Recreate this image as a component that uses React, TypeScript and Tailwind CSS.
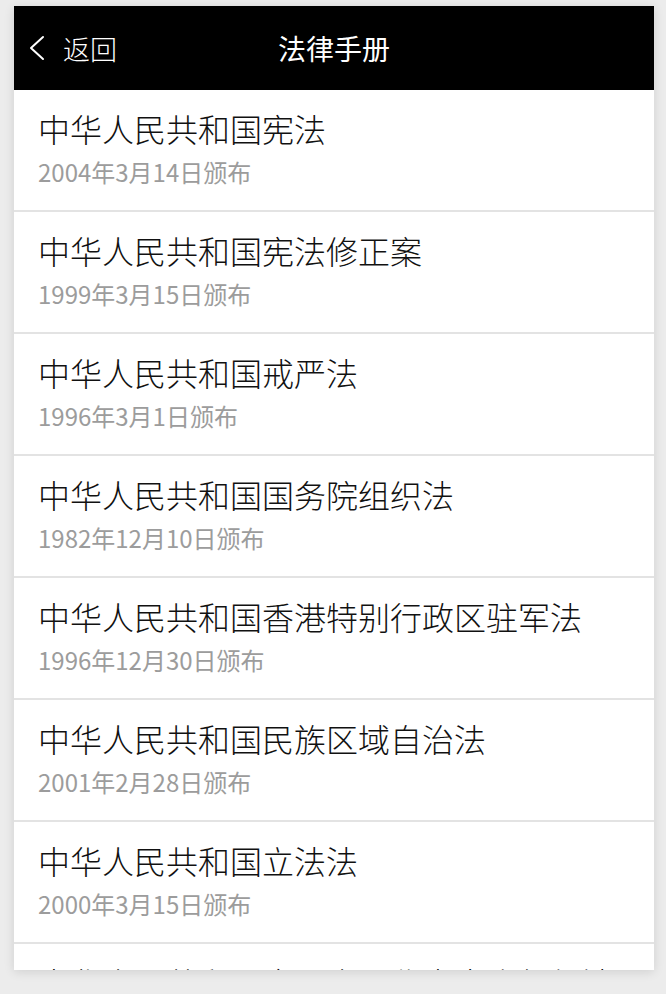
const laws = [
  { title: "中华人民共和国宪法", date: "2004年3月14日颁布" },
  { title: "中华人民共和国宪法修正案", date: "1999年3月15日颁布" },
  { title: "中华人民共和国戒严法", date: "1996年3月1日颁布" },
  { title: "中华人民共和国国务院组织法", date: "1982年12月10日颁布" },
  { title: "中华人民共和国香港特别行政区驻军法", date: "1996年12月30日颁布" },
  { title: "中华人民共和国民族区域自治法", date: "2001年2月28日颁布" },
  { title: "中华人民共和国立法法", date: "2000年3月15日颁布" },
  { title: "中华人民共和国全国人民代表大会组织法", date: "1982年12月10日颁布" },
];

export default function App() {
  return (
    <div
      className="w-[666px] h-[994px] bg-[#ececec] pt-[6px] pl-[14px]"
      style={{ fontFamily: '"Noto Sans CJK SC", "Noto Sans", sans-serif' }}
    >
      <div className="w-[640px] h-[964px] bg-white overflow-hidden shadow-[0_2px_10px_rgba(0,0,0,0.12)]">
        <header className="relative h-[84px] bg-black flex items-center justify-center text-white">
          <button className="absolute left-[15px] top-0 h-full flex items-center gap-[18px]">
            <svg width="16" height="26" viewBox="0 0 16 26" fill="none" stroke="currentColor" strokeWidth="2" strokeLinecap="round" strokeLinejoin="round">
              <polyline points="14,2 2,13 14,24" />
            </svg>
            <span className="text-[27px] leading-none font-light">返回</span>
          </button>
          <h1 className="text-[28px] leading-none font-normal">法律手册</h1>
        </header>
        <ul>
          {laws.map((law) => (
            <li
              key={law.title}
              className="h-[122px] border-b-2 border-[#e3e3e3] pl-[24px] pb-[5px] flex flex-col justify-center gap-[9px]"
            >
              <div className="text-[32px] leading-[40px] text-[#111] font-light">{law.title}</div>
              <div className="text-[24px] leading-[30px] text-[#9c9c9c]">{law.date}</div>
            </li>
          ))}
        </ul>
      </div>
    </div>
  );
}
